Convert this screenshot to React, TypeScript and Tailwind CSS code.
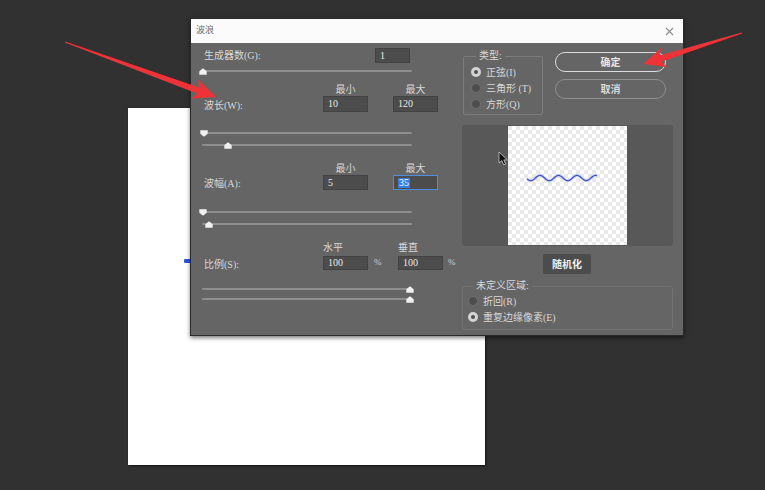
import React from "react";

type Pt = [number, number];

const F = "font-['Liberation_Serif','Noto_Sans_CJK_SC',serif]";

function arrowPoints(tail: Pt, tip: Pt, headLen: number, headHalf: number, shaftHalf: number, tailHalf: number) {
  const dx = tip[0] - tail[0];
  const dy = tip[1] - tail[1];
  const len = Math.hypot(dx, dy);
  const ux = dx / len;
  const uy = dy / len;
  const nx = -uy;
  const ny = ux;
  const bx = tip[0] - ux * headLen;
  const by = tip[1] - uy * headLen;
  const cx = bx - ux * 4;
  const cy = by - uy * 4;
  const pts: Pt[] = [
    [tail[0] + nx * tailHalf, tail[1] + ny * tailHalf],
    [bx + nx * shaftHalf, by + ny * shaftHalf],
    [cx + nx * headHalf, cy + ny * headHalf],
    tip,
    [cx - nx * headHalf, cy - ny * headHalf],
    [bx - nx * shaftHalf, by - ny * shaftHalf],
    [tail[0] - nx * tailHalf, tail[1] - ny * tailHalf],
  ];
  return pts.map((p) => `${p[0].toFixed(1)},${p[1].toFixed(1)}`).join(" ");
}

function wavePath() {
  const pts: string[] = [];
  for (let x = 19; x <= 89; x += 0.5) {
    const y = 52 - 2.6 * Math.cos((2 * Math.PI * (x - 32)) / 18.5);
    pts.push(`${x.toFixed(1)} ${y.toFixed(2)}`);
  }
  return "M" + pts.join(" L");
}

function Thumb({ x, dir }: { x: number; dir: "up" | "down" }) {
  return (
    <svg width="8" height="7" className="absolute top-[2px]" style={{ left: x - 4 }}>
      {dir === "up" ? (
        <path d="M4 0.3 L7.7 3.2 L7.7 6.7 L0.3 6.7 L0.3 3.2 Z" fill="#f0f0f0" />
      ) : (
        <path d="M0.3 0.3 L7.7 0.3 L7.7 3.8 L4 6.7 L0.3 3.8 Z" fill="#f0f0f0" />
      )}
    </svg>
  );
}

function Slider({ className, x, dir }: { className: string; x: number; dir: "up" | "down" }) {
  return (
    <div className={`relative h-[10px] w-[210px] ${className}`}>
      <div className="absolute left-0 right-0 top-[4px] h-[2px] rounded-full bg-[#8e8e8e]" />
      <Thumb x={x} dir={dir} />
    </div>
  );
}

function Input({ w, value, selected }: { w: string; value: string; selected?: boolean }) {
  return (
    <div
      className={`flex h-full ${w} items-center border pl-[4px] text-[10px] leading-none text-[#e8e8e8] ${
        selected ? "border-[#4a8fe0] bg-[#4c4c4c]" : "border-[#424242] bg-[#4c4c4c]"
      }`}
    >
      {selected ? <span className="bg-[#3a7de0] px-[1px] text-white">{value}</span> : value}
    </div>
  );
}

function Radio({ label, checked }: { label: string; checked?: boolean }) {
  return (
    <div className="flex h-[16px] items-center gap-[5px] text-[10px] text-[#d8d8d8]">
      {checked ? (
        <span className="flex h-[10px] w-[10px] items-center justify-center rounded-full bg-[#d4d4d4]">
          <span className="h-[4px] w-[4px] rounded-full bg-[#505050]" />
        </span>
      ) : (
        <span className="h-[10px] w-[10px] rounded-full border border-[#6f6f6f] bg-[#4d4d4d]" />
      )}
      <span>{label}</span>
    </div>
  );
}

function LeftCol() {
  const lbl = "w-[121px] pl-[2px] text-[10px] text-[#d8d8d8]";
  return (
    <div className="flex w-[272px] flex-col pl-[11px] pt-[5px]">
      <div className="flex h-[15px] items-center">
        <div className="w-[173px] pl-[2px] text-[10px] text-[#d8d8d8]">生成器数(G):</div>
        <Input w="w-[35px]" value="1" />
      </div>
      <Slider className="mt-[3px]" x={1} dir="up" />

      <div className="mt-[7px] flex h-[12px] items-center text-[10px] text-[#d8d8d8]">
        <div className="w-[121px]" />
        <div className="w-[45px] text-center">最小</div>
        <div className="w-[25px]" />
        <div className="w-[45px] text-center">最大</div>
      </div>
      <div className="mt-[1px] flex h-[16px] items-center">
        <div className={`${lbl} pt-[3px]`}>波长(W):</div>
        <Input w="w-[45px]" value="10" />
        <div className="w-[25px]" />
        <Input w="w-[45px]" value="120" />
      </div>
      <Slider className="mt-[16px]" x={2} dir="down" />
      <Slider className="mt-[2px]" x={26} dir="up" />

      <div className="mt-[12px] flex h-[12px] items-center text-[10px] text-[#d8d8d8]">
        <div className="w-[121px]" />
        <div className="w-[45px] text-center">最小</div>
        <div className="w-[25px]" />
        <div className="w-[45px] text-center">最大</div>
      </div>
      <div className="mt-[1px] flex h-[15px] items-center">
        <div className={`${lbl} pt-[2px]`}>波幅(A):</div>
        <Input w="w-[45px]" value="5" />
        <div className="w-[25px]" />
        <Input w="w-[45px]" value="35" selected />
      </div>
      <Slider className="mt-[17px]" x={1} dir="down" />
      <Slider className="mt-[2px]" x={7} dir="up" />

      <div className="mt-[12px] flex h-[12px] items-center text-[10px] text-[#d8d8d8]">
        <div className="w-[121px]" />
        <div className="w-[75px]">水平</div>
        <div className="w-[45px]">垂直</div>
      </div>
      <div className="mt-[3px] flex h-[14px] items-center">
        <div className={`${lbl} pt-[3px]`}>比例(S):</div>
        <Input w="w-[45px]" value="100" />
        <div className="w-[30px] pl-[6px] text-[9px] text-[#cfcfcf]">%</div>
        <Input w="w-[45px]" value="100" />
        <div className="pl-[5px] text-[9px] text-[#cfcfcf]">%</div>
      </div>
      <Slider className="mt-[14px]" x={208} dir="up" />
      <Slider className="" x={208} dir="up" />
    </div>
  );
}

function RightCol() {
  return (
    <div className="flex w-[222px] flex-col">
      <div className="flex items-start">
        <div className="relative ml-[1px] mt-[13px] h-[59px] w-[80px] rounded-[2px] border border-[#7c7c7c] pl-[7px] pt-[7px]">
          <span className="absolute left-[12px] top-[-7px] bg-[#656565] px-[3px] text-[10px] leading-[12px] text-[#d8d8d8]">
            类型:
          </span>
          <Radio label="正弦(I)" checked />
          <Radio label="三角形 (T)" />
          <Radio label="方形(Q)" />
        </div>
        <div className="ml-[12px] mt-[9px] flex w-[111px] flex-col gap-[7px]">
          <div className="flex h-[20px] items-center justify-center rounded-full border-[1.5px] border-[#dcdcdc] text-[10px] font-bold text-[#e6e6e6]">
            确定
          </div>
          <div className="flex h-[20px] items-center justify-center rounded-full border-[1.5px] border-[#8f8f8f] text-[10px] font-bold text-[#dadada]">
            取消
          </div>
        </div>
      </div>

      <div className="mt-[10px] flex h-[121px] w-[211px] rounded-[3px] bg-[#585858] pl-[46px] pt-[1px]">
        <svg width="119" height="119" className="block">
          <defs>
            <pattern id="chk" width="8" height="8" patternUnits="userSpaceOnUse">
              <rect width="8" height="8" fill="#ffffff" />
              <rect width="4" height="4" fill="#e9e9e9" />
              <rect x="4" y="4" width="4" height="4" fill="#e9e9e9" />
            </pattern>
          </defs>
          <rect width="119" height="119" fill="url(#chk)" />
          <path d={wavePath()} stroke="#b9c3f3" strokeWidth="3.2" fill="none" opacity="0.6" />
          <path d={wavePath()} stroke="#4452c2" strokeWidth="1.3" fill="none" />
        </svg>
      </div>

      <div className="ml-[81px] mt-[8px] flex h-[20px] w-[48px] items-center justify-center rounded-[2px] bg-[#4c4c4c] text-[10px] font-bold text-[#f0f0f0]">
        随机化
      </div>

      <div className="relative mt-[12px] h-[44px] w-[211px] rounded-[3px] border border-[#737373] pl-[5px] pt-[6px]">
        <span className="absolute left-[10px] top-[-7px] bg-[#656565] px-[3px] text-[10px] leading-[12px] text-[#d8d8d8]">
          未定义区域:
        </span>
        <Radio label="折回(R)" />
        <Radio label="重复边缘像素(E)" checked />
      </div>
    </div>
  );
}

export default function App() {
  const a1 = arrowPoints([65, 42], [216, 97], 19, 10, 3.2, 0.6);
  const a2 = arrowPoints([742, 33], [643, 64], 18, 10, 3.2, 0.6);
  return (
    <div className={`relative h-[490px] w-[765px] overflow-hidden bg-[#313131] ${F}`}>
      <div className="absolute left-[128px] top-[108px] h-[357px] w-[357px] bg-white shadow-[1px_1px_2px_rgba(0,0,0,0.6)]" />
      <div className="absolute left-[184px] top-[259px] h-[4px] w-[8px] rounded-[1px] bg-[#2a55e6]" />

      <div className="absolute left-[190px] top-[18px] flex h-[318px] w-[494px] flex-col border border-[#2a2a2a] bg-[#656565] shadow-[0_2px_4px_rgba(0,0,0,0.5)]">
        <div className="flex h-[24px] items-center justify-between bg-[#fbfbfb] pl-[5px] pr-[9px]">
          <span className="text-[9px] text-[#6a6a6a]">波浪</span>
          <svg width="9" height="9" viewBox="0 0 9 9">
            <path d="M1 1 L8 8 M8 1 L1 8" stroke="#8a8a8a" strokeWidth="1.1" />
          </svg>
        </div>
        <div className="flex flex-1">
          <LeftCol />
          <RightCol />
        </div>
      </div>

      <svg className="pointer-events-none absolute left-0 top-0" width="765" height="490">
        <g transform="translate(499 152)">
          <path d="M0 0 L0 11 L2.8 8.6 L4.7 12.8 L6.6 12 L4.8 7.9 L8.3 7.9 Z" fill="#111" stroke="#ddd" strokeWidth="0.7" />
        </g>
        <polygon points={a1} fill="#ee3338" />
        <polygon points={a2} fill="#ee3338" />
      </svg>
    </div>
  );
}
